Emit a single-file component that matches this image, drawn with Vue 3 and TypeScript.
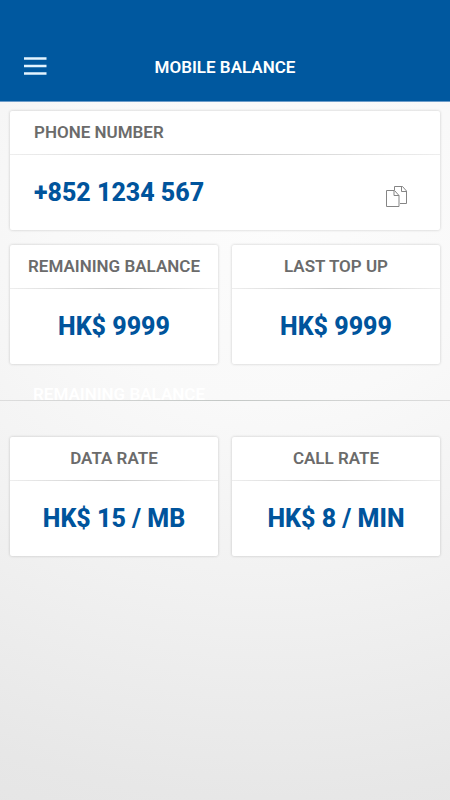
<script setup lang="ts">
interface Stat {
  label: string
  value: string
}

const phoneNumber = '+852 1234 567'

const balances: Stat[] = [
  { label: 'REMAINING BALANCE', value: 'HK$ 9999' },
  { label: 'LAST TOP UP', value: 'HK$ 9999' },
]

const rates: Stat[] = [
  { label: 'DATA RATE', value: 'HK$ 15 / MB' },
  { label: 'CALL RATE', value: 'HK$ 8 / MIN' },
]

function copyNumber(): void {
  navigator.clipboard?.writeText(phoneNumber)
}
</script>

<template>
  <div class="page">
    <header class="bar">
      <button class="icon-button" type="button" aria-label="Menu">
        <svg width="24" height="20" viewBox="0 0 24 20" aria-hidden="true">
          <path d="M0 1.5H22.5M0 9H22.5M0 16.5H22.5" stroke="#e3f4ff" stroke-width="2.4" />
        </svg>
      </button>
      <h1>MOBILE BALANCE</h1>
    </header>

    <main>
      <section class="card phone">
        <h2>PHONE NUMBER</h2>
        <div class="body">
          <p>{{ phoneNumber }}</p>
          <button class="icon-button copy" type="button" aria-label="Copy phone number" @click="copyNumber">
            <svg width="22" height="22" viewBox="0 0 22 22" fill="none" stroke="#858585" aria-hidden="true">
              <path d="M8.5 4V0.5H16.5L20.5 5V17.5H14" />
              <path d="M15.5 0.5V5.5H20.5" />
              <path d="M0.5 4.5H8.5L13 9.5V20.5H0.5Z" fill="#fff" />
              <path d="M8 4.5V9.5H13" />
            </svg>
          </button>
        </div>
      </section>

      <div class="pair">
        <section v-for="item in balances" :key="item.label" class="card">
          <h2>{{ item.label }}</h2>
          <div class="body"><p>{{ item.value }}</p></div>
        </section>
      </div>

      <div class="section-label">REMAINING BALANCE</div>

      <div class="pair">
        <section v-for="item in rates" :key="item.label" class="card">
          <h2>{{ item.label }}</h2>
          <div class="body"><p>{{ item.value }}</p></div>
        </section>
      </div>
    </main>
  </div>
</template>

<style>
body {
  margin: 0;
}
</style>

<style scoped>
.page {
  min-height: 100vh;
  font-family: Roboto, "Liberation Sans", sans-serif;
  background: radial-gradient(ellipse 800px 680px at 60% 220px, #fcfcfc 0%, #f9f9f9 27%, #f1f1f1 55%, #e7e7e7 85%, #e4e4e4 100%);
}

.bar {
  box-sizing: border-box;
  height: 102px;
  padding: 33px 24px 0;
  display: grid;
  grid-template-columns: 24px 1fr 24px;
  align-items: center;
  background: #00589f;
  border-bottom: 1px solid #6c9cc9;
}

h1,
h2,
p {
  margin: 0;
}

h1 {
  text-align: center;
  color: #fff;
  font-size: 17px;
  line-height: 24px;
  font-weight: 600;
}

.icon-button {
  padding: 0;
  border: 0;
  background: none;
  display: flex;
  cursor: pointer;
}

main {
  padding-top: 9px;
}

.card {
  background: #fff;
  border-radius: 2px;
  box-shadow: 0 0 3px rgba(0, 0, 0, 0.2);
}

.phone {
  margin: 0 10px 15px;
}

.pair {
  display: grid;
  grid-template-columns: 1fr 1fr;
  gap: 14px;
  padding: 0 10px;
}

h2 {
  height: 43px;
  line-height: 42px;
  text-align: center;
  color: #6b6b6b;
  font-size: 17px;
  font-weight: 600;
}

.body {
  height: 75px;
  display: flex;
  align-items: center;
  justify-content: center;
  border-top: 1px solid;
  border-image: linear-gradient(90deg, #eee, #ccc 50%, #eee) 1;
}

.body p {
  color: #00549c;
  font-size: 25px;
  line-height: 30px;
  font-weight: 800;
}

.phone h2 {
  padding-left: 24px;
  text-align: left;
}

.phone .body {
  padding: 0 32px 0 24px;
  justify-content: space-between;
}

.copy {
  padding-top: 8px;
}

.section-label {
  height: 18px;
  margin-bottom: 36px;
  padding: 18px 33px 0;
  overflow: hidden;
  color: #fff;
  font-size: 17px;
  line-height: 24px;
  font-weight: 600;
  border-bottom: 1px solid;
  border-image: linear-gradient(90deg, #ddd, #c4c8c6 50%, #ddd) 1;
}
</style>
